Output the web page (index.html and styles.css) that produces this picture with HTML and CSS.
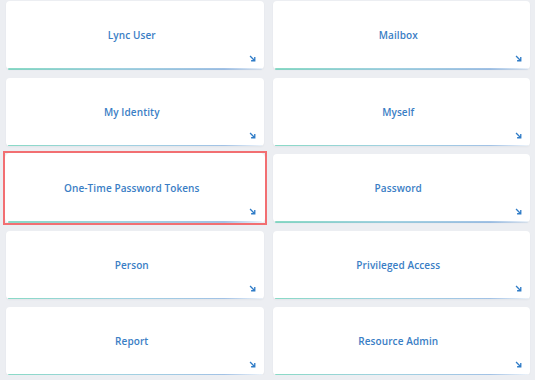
FILE: index.html
```html
<!DOCTYPE html>
<html lang="en">
<head>
<meta charset="utf-8">
<title>Tiles</title>
<link rel="stylesheet" href="styles.css">
</head>
<body>
<div class="grid">
  <a class="tile"><span class="label">Lync User</span><svg class="arrow" viewBox="0 0 8 8"><path d="M1.2 1.2 L6 6 M6.6 2.4 V6.6 H2.4"/></svg></a>
  <a class="tile"><span class="label">Mailbox</span><svg class="arrow" viewBox="0 0 8 8"><path d="M1.2 1.2 L6 6 M6.6 2.4 V6.6 H2.4"/></svg></a>
  <a class="tile"><span class="label">My Identity</span><svg class="arrow" viewBox="0 0 8 8"><path d="M1.2 1.2 L6 6 M6.6 2.4 V6.6 H2.4"/></svg></a>
  <a class="tile"><span class="label">Myself</span><svg class="arrow" viewBox="0 0 8 8"><path d="M1.2 1.2 L6 6 M6.6 2.4 V6.6 H2.4"/></svg></a>
  <a class="tile selected"><span class="label">One-Time Password Tokens</span><svg class="arrow" viewBox="0 0 8 8"><path d="M1.2 1.2 L6 6 M6.6 2.4 V6.6 H2.4"/></svg></a>
  <a class="tile"><span class="label">Password</span><svg class="arrow" viewBox="0 0 8 8"><path d="M1.2 1.2 L6 6 M6.6 2.4 V6.6 H2.4"/></svg></a>
  <a class="tile"><span class="label">Person</span><svg class="arrow" viewBox="0 0 8 8"><path d="M1.2 1.2 L6 6 M6.6 2.4 V6.6 H2.4"/></svg></a>
  <a class="tile"><span class="label">Privileged Access</span><svg class="arrow" viewBox="0 0 8 8"><path d="M1.2 1.2 L6 6 M6.6 2.4 V6.6 H2.4"/></svg></a>
  <a class="tile"><span class="label">Report</span><svg class="arrow" viewBox="0 0 8 8"><path d="M1.2 1.2 L6 6 M6.6 2.4 V6.6 H2.4"/></svg></a>
  <a class="tile"><span class="label">Resource Admin</span><svg class="arrow" viewBox="0 0 8 8"><path d="M1.2 1.2 L6 6 M6.6 2.4 V6.6 H2.4"/></svg></a>
</div>
</body>
</html>
```
FILE: styles.css
```css
html, body {
  margin: 0;
  padding: 0;
  background: #eceef2;
  font-family: "Open Sans", "Liberation Sans", sans-serif;
}

.grid {
  display: grid;
  grid-template-columns: 1fr 1fr;
  grid-auto-rows: 68px;
  column-gap: 9px;
  row-gap: 8.5px;
  padding: 1px 5px 0 6px;
}

.tile {
  position: relative;
  display: flex;
  align-items: center;
  justify-content: center;
  padding-right: 6px;
  background: #ffffff;
  border-radius: 4px;
  box-shadow: 0 1px 2px rgba(40, 50, 70, 0.05);
  color: #3a7ec5;
  text-decoration: none;
}

.tile::after {
  content: "";
  position: absolute;
  left: 2px;
  right: 2px;
  bottom: -0.5px;
  height: 1.5px;
  border-radius: 1px;
  background: linear-gradient(to right, rgba(98, 205, 179, 0.75) 0%, rgba(121, 190, 212, 0.7) 45%, rgba(122, 168, 219, 0.7) 85%, rgba(122, 168, 219, 0.15) 100%);
}

.label {
  font-size: 10px;
  font-weight: 600;
  letter-spacing: 0.1px;
}

.arrow {
  position: absolute;
  right: 8px;
  bottom: 7px;
  width: 7px;
  height: 7px;
  fill: none;
  stroke: #2f7cc7;
  stroke-width: 1.5;
}

.selected {
  box-shadow: 0 0 0 1px #ffffff;
}

.selected::before {
  content: "";
  position: absolute;
  inset: -3px;
  border: 2px solid #f26f72;
  pointer-events: none;
}
```
